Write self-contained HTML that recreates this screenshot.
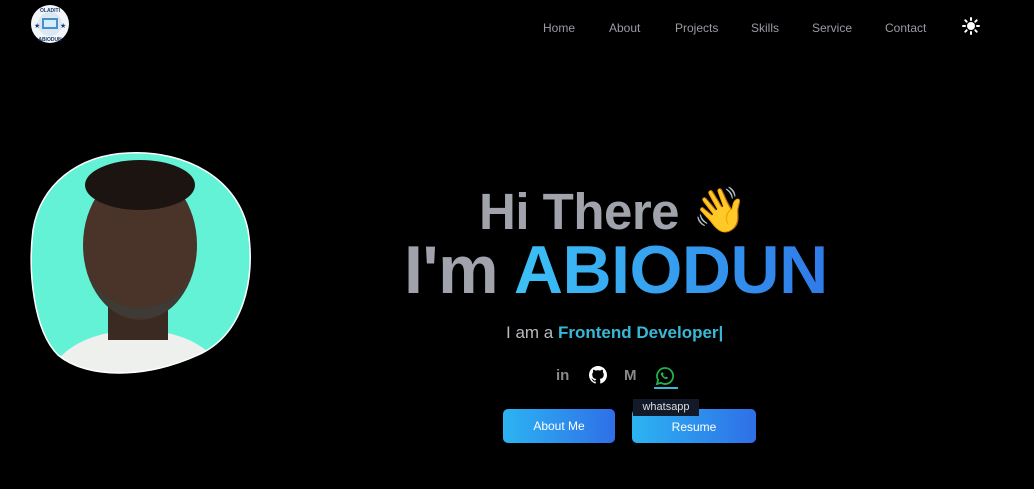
<!DOCTYPE html>
<html><head><meta charset="utf-8"><style>
*{margin:0;padding:0;box-sizing:border-box}
body{width:1034px;height:489px;background:#000;position:relative;overflow:hidden;font-family:"Liberation Sans",sans-serif}
.nav a{position:absolute;top:21px;font-size:12px;color:#9a9ca3;text-decoration:none}
.t{position:absolute;white-space:nowrap;font-weight:bold}
.btn{position:absolute;top:409px;height:34px;border-radius:5px;background:linear-gradient(90deg,#2cb4f2,#2f6fe8);color:#fff;font-size:12px;text-align:center;line-height:34px}
</style></head><body>
<svg style="position:absolute;left:28px;top:4px" width="44" height="40" viewBox="0 0 44 40">
<circle cx="22" cy="20" r="19" fill="#f2f6fa"/><circle cx="22" cy="20" r="12" fill="#dbe7f2"/>
<rect x="14" y="14" width="16" height="11" fill="#4a90c8"/><rect x="16" y="16" width="12" height="7" fill="#d6ecff"/>
<text x="22" y="8" font-size="5" text-anchor="middle" fill="#1b3c6c" font-weight="bold">OLADITI</text>
<text x="22" y="37" font-size="5" text-anchor="middle" fill="#1b3c6c" font-weight="bold">ABIODUN</text>
<text x="6" y="24" font-size="7" fill="#1b3c6c">★</text><text x="32" y="24" font-size="7" fill="#1b3c6c">★</text>
</svg>
<div class="nav"><a style="left:543px">Home</a><a style="left:609px">About</a><a style="left:675px">Projects</a><a style="left:751px">Skills</a><a style="left:812px">Service</a><a style="left:885px">Contact</a></div>
<svg style="position:absolute;left:962px;top:17px" width="18" height="18" viewBox="0 0 18 18"><circle cx="9" cy="9" r="4" fill="#fff"/><g stroke="#fff" stroke-width="2" stroke-linecap="round"><path d="M9 1v2M9 15v2M1 9h2M15 9h2M3.3 3.3l1.4 1.4M13.3 13.3l1.4 1.4M3.3 14.7l1.4-1.4M13.3 4.7l1.4-1.4"/></g></svg>

<svg style="position:absolute;left:28px;top:150px" width="225" height="228" viewBox="0 0 225 228">
<defs><clipPath id="c"><path d="M100 3C160 0 210 30 220 80C228 130 215 185 170 205C120 228 60 230 30 205C5 180 0 120 5 80C12 35 50 5 100 3Z"/></clipPath></defs>
<g clip-path="url(#c)"><rect width="225" height="228" fill="#63f2d6"/>
<path d="M20 228C30 195 70 180 110 180C150 180 185 195 200 228Z" fill="#eef0ee"/>
<rect x="80" y="140" width="60" height="50" fill="#3a2a22"/>
<ellipse cx="112" cy="95" rx="57" ry="75" fill="#4a3328"/>
<ellipse cx="112" cy="35" rx="55" ry="25" fill="#1c1410"/>
<path d="M62 120C70 185 155 185 162 120C155 170 70 170 62 120Z" fill="#3e3a36"/>
</g>
<path d="M100 3C160 0 210 30 220 80C228 130 215 185 170 205C120 228 60 230 30 205C5 180 0 120 5 80C12 35 50 5 100 3Z" fill="none" stroke="#fff" stroke-width="1.5"/>
</svg>

<div class="t" style="left:479px;top:182px;font-size:51px;color:#a0a3ab;letter-spacing:-0.5px">Hi There <span style="font-size:44px;position:relative;top:-4px">👋</span></div>
<div class="t" style="left:404px;top:231px;font-size:68px;letter-spacing:-0.5px"><span style="color:#a0a3ab">I'm </span><span style="background:linear-gradient(90deg,#3cc2f5,#2f7ae8);-webkit-background-clip:text;color:transparent">ABIODUN</span></div>
<div class="t" style="left:506px;top:323px;font-size:17px;font-weight:normal;color:#b8bac0">I am a <b style="color:#39b8d6">Frontend Developer|</b></div>

<div class="t" style="left:556px;top:367px;font-size:15px;color:#8a8a8a">in</div>
<svg style="position:absolute;left:589px;top:366px" width="18" height="18" viewBox="0 0 16 16"><path fill="#fff" d="M8 0C3.6 0 0 3.6 0 8c0 3.5 2.3 6.5 5.5 7.6.4.1.5-.2.5-.4v-1.4c-2.2.5-2.700-1-2.700-1-.4-.9-.9-1.2-.9-1.2-.7-.5.1-.5.1-.5.8.1 1.200.8 1.200.8.7 1.200 1.900.9 2.300.7.1-.5.3-.9.5-1.100-1.800-.2-3.600-.9-3.600-4 0-.9.3-1.600.8-2.100-.1-.2-.4-1 .1-2.100 0 0 .7-.2 2.200.8.6-.2 1.300-.3 2-.3s1.400.1 2 .3c1.500-1 2.200-.8 2.200-.8.4 1.100.2 1.900.1 2.100.5.6.8 1.300.8 2.100 0 3.100-1.900 3.700-3.600 3.900.3.3.5.8.5 1.500v2.200c0 .2.1.5.6.4C13.700 14.500 16 11.500 16 8c0-4.400-3.600-8-8-8z"/></svg>
<div class="t" style="left:624px;top:367px;font-size:15px;color:#8a8a8a">M</div>
<svg style="position:absolute;left:655px;top:366px" width="20" height="20" viewBox="0 0 20 20"><path d="M10 2a8 8 0 0 0-6.9 12L2 18l4.1-1.1A8 8 0 1 0 10 2z" fill="none" stroke="#22b14c" stroke-width="1.8"/><path d="M7 6.5c.3-.3.8-.3 1 .1l.6 1.3c.1.3 0 .5-.2.7l-.4.4c.5 1 1.3 1.8 2.3 2.3l.4-.4c.2-.2.5-.3.7-.2l1.3.6c.4.2.4.7.1 1-.9.9-2.2 1-3.500.2C8 11.700 6.600 10.300 6 8.900c-.5-1-.2-2 1-2.400z" fill="#22b14c"/></svg>
<div style="position:absolute;left:654px;top:387px;width:24px;height:2px;background:#39b8d6"></div>

<div class="btn" style="left:503px;width:112px">About Me</div>
<div class="btn" style="left:632px;width:124px;line-height:36px">Resume</div>
<div style="position:absolute;left:633px;top:399px;width:66px;height:17px;background:#121a2a;color:#ddd;font-size:11px;text-align:center;line-height:17px">whatsapp</div>
</body></html>
